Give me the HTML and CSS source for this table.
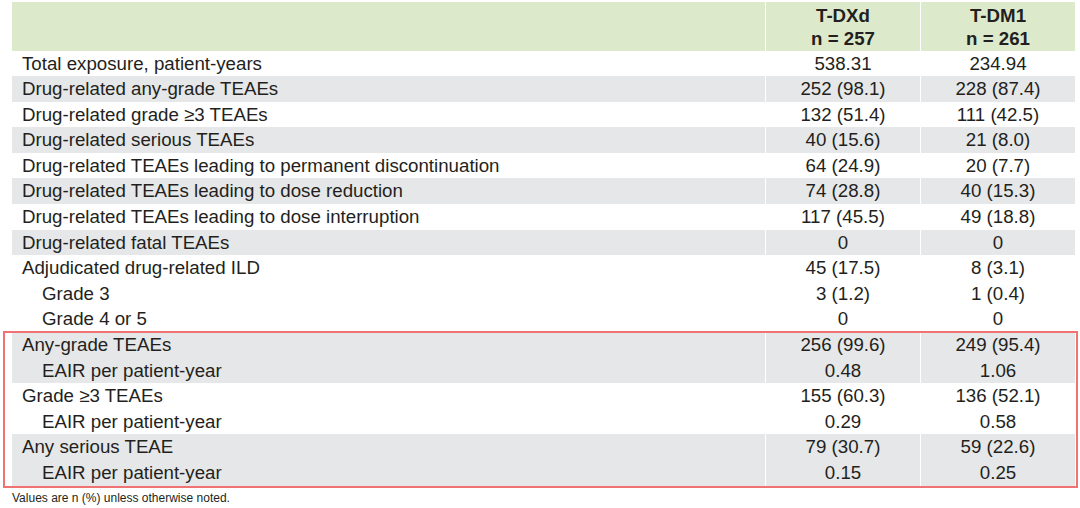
FILE: index.html
```html
<!DOCTYPE html>
<html>
<head>
<meta charset="utf-8">
<link rel="stylesheet" href="styles.css">
</head>
<body>
<div class="page">
  <div class="table">
    <div class="row head">
      <div class="c label"></div>
      <div class="c num">T-DXd<br>n = 257</div>
      <div class="c num">T-DM1<br>n = 261</div>
    </div>
    <div class="row"><div class="c label">Total exposure, patient-years</div><div class="c num">538.31</div><div class="c num">234.94</div></div>
    <div class="row gray"><div class="c label">Drug-related any-grade TEAEs</div><div class="c num">252 (98.1)</div><div class="c num">228 (87.4)</div></div>
    <div class="row"><div class="c label">Drug-related grade ≥3 TEAEs</div><div class="c num">132 (51.4)</div><div class="c num">111 (42.5)</div></div>
    <div class="row gray"><div class="c label">Drug-related serious TEAEs</div><div class="c num">40 (15.6)</div><div class="c num">21 (8.0)</div></div>
    <div class="row"><div class="c label">Drug-related TEAEs leading to permanent discontinuation</div><div class="c num">64 (24.9)</div><div class="c num">20 (7.7)</div></div>
    <div class="row gray"><div class="c label">Drug-related TEAEs leading to dose reduction</div><div class="c num">74 (28.8)</div><div class="c num">40 (15.3)</div></div>
    <div class="row"><div class="c label">Drug-related TEAEs leading to dose interruption</div><div class="c num">117 (45.5)</div><div class="c num">49 (18.8)</div></div>
    <div class="row gray"><div class="c label">Drug-related fatal TEAEs</div><div class="c num">0</div><div class="c num">0</div></div>
    <div class="row"><div class="c label">Adjudicated drug-related ILD</div><div class="c num">45 (17.5)</div><div class="c num">8 (3.1)</div></div>
    <div class="row"><div class="c label indent">Grade 3</div><div class="c num">3 (1.2)</div><div class="c num">1 (0.4)</div></div>
    <div class="row"><div class="c label indent">Grade 4 or 5</div><div class="c num">0</div><div class="c num">0</div></div>
    <div class="group">
      <div class="row gray"><div class="c label">Any-grade TEAEs</div><div class="c num">256 (99.6)</div><div class="c num">249 (95.4)</div></div>
      <div class="row gray"><div class="c label indent">EAIR per patient-year</div><div class="c num">0.48</div><div class="c num">1.06</div></div>
      <div class="row"><div class="c label">Grade ≥3 TEAEs</div><div class="c num">155 (60.3)</div><div class="c num">136 (52.1)</div></div>
      <div class="row"><div class="c label indent">EAIR per patient-year</div><div class="c num">0.29</div><div class="c num">0.58</div></div>
      <div class="row gray"><div class="c label">Any serious TEAE</div><div class="c num">79 (30.7)</div><div class="c num">59 (22.6)</div></div>
      <div class="row gray"><div class="c label indent">EAIR per patient-year</div><div class="c num">0.15</div><div class="c num">0.25</div></div>
    </div>
  </div>
  <div class="note">Values are n (%) unless otherwise noted.</div>
</div>
</body>
</html>
```

FILE: styles.css
```css
html, body {
  margin: 0;
  padding: 0;
  background: #ffffff;
}
.page {
  padding: 2px 0 0 12px;
  font-family: "Liberation Sans", Arial, sans-serif;
  color: #231f20;
}
.table {
  width: 1063px;
}
.row {
  display: grid;
  grid-template-columns: 753px 155px 155px;
  height: 25.6px;
}
.row.gray {
  background: #e6e7e8;
}
.row.head {
  height: 48.5px;
  background: #dde9cb;
  font-weight: bold;
}
.c {
  font-size: 18.7px;
  line-height: 25.6px;
  white-space: nowrap;
}
.head .c {
  line-height: 23px;
  padding-top: 2px;
}
.label {
  padding-left: 10px;
}
.label.indent {
  padding-left: 30px;
}
.num {
  text-align: center;
  border-left: 1px solid #ffffff;
}
.group {
  position: relative;
}
.group::after {
  content: "";
  position: absolute;
  top: -1px;
  left: -9px;
  right: -3px;
  bottom: -2px;
  border: 2px solid #f07272;
  pointer-events: none;
}
.note {
  font-size: 12px;
  color: #231f20;
  padding-top: 5px;
}
```
